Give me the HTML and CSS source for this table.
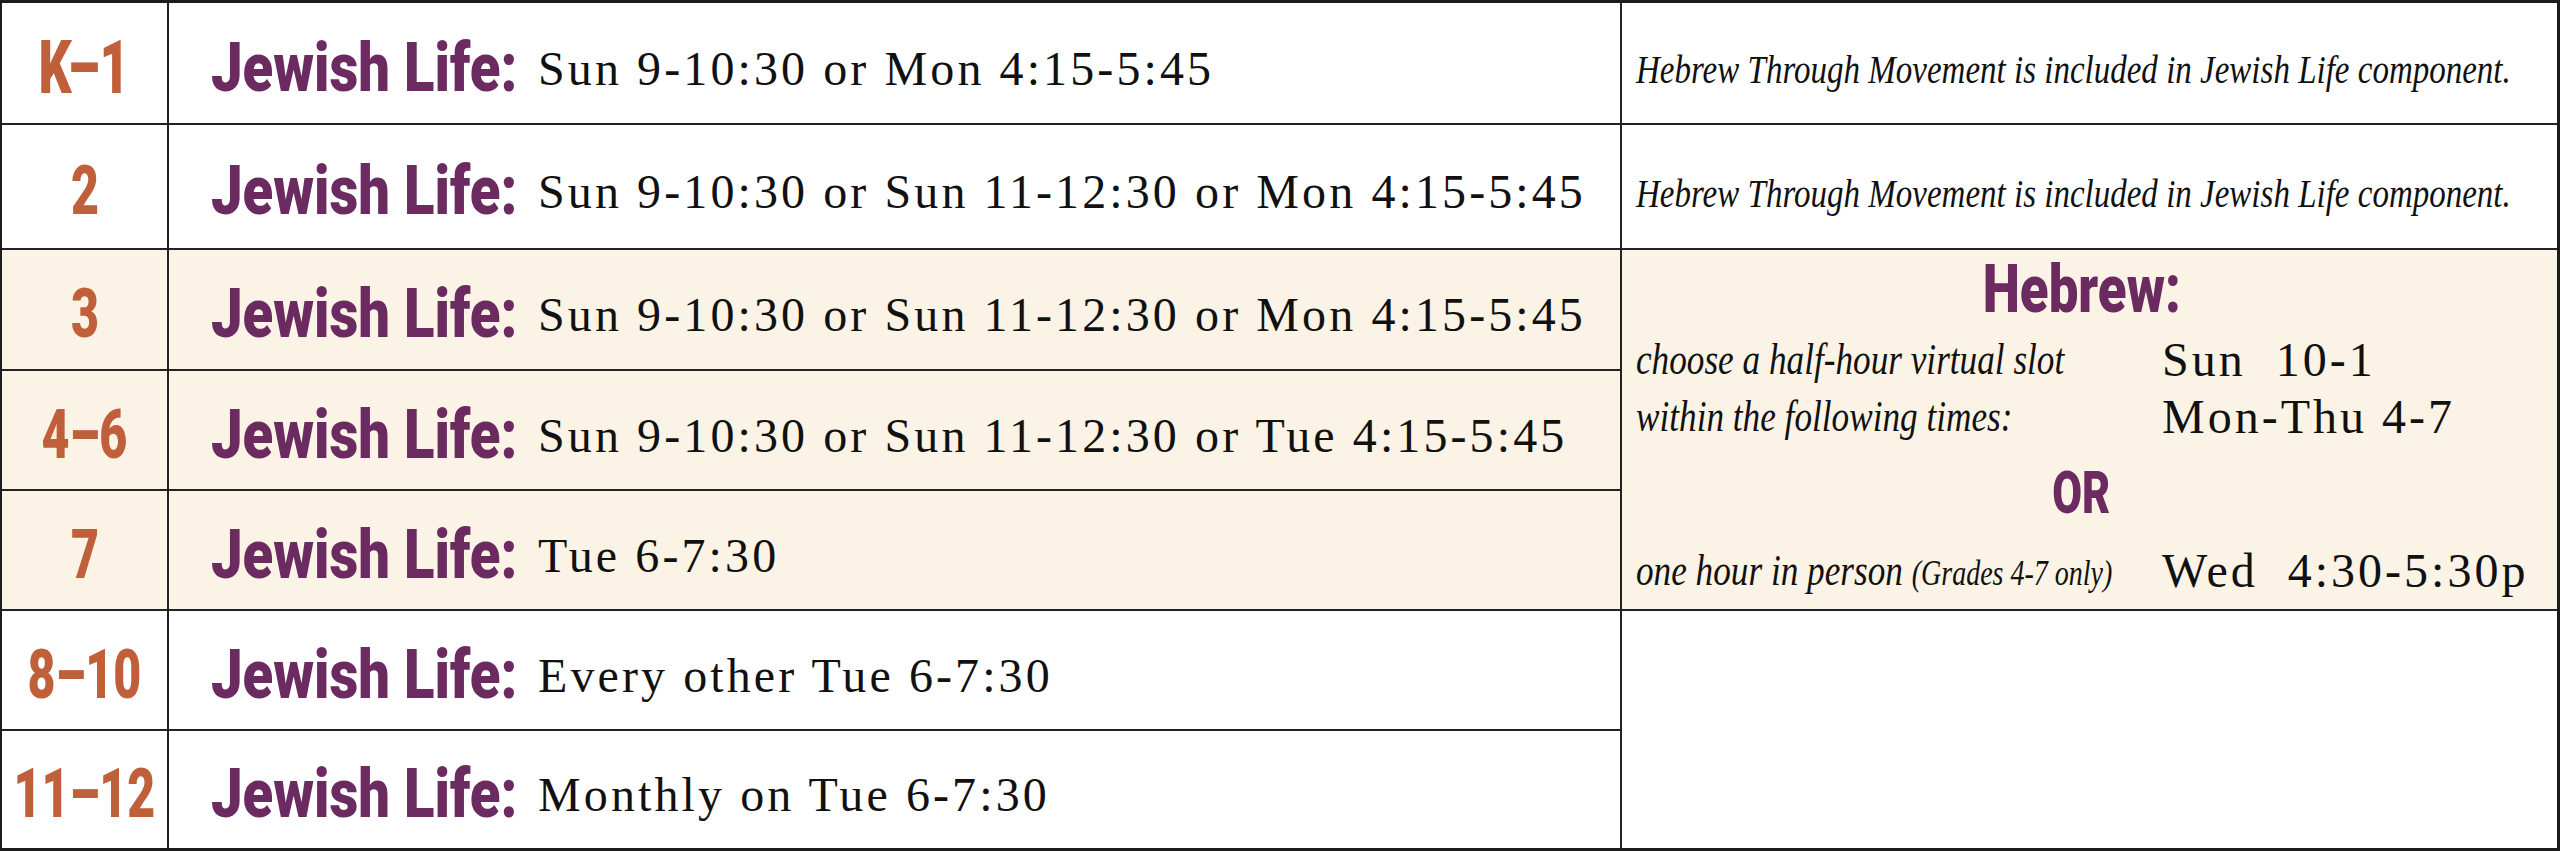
FILE: index.html
```html
<!DOCTYPE html>
<html lang="en">
<head>
<meta charset="utf-8">
<title>Schedule</title>
<link rel="stylesheet" href="styles.css">
</head>
<body>
<div class="sched">
  <div class="cell grade"><span class="g k1">K–1</span></div>
  <div class="cell jl"><span class="lbl"><span class="lbl-in">Jewish Life:</span></span><span class="times">Sun 9-10:30 or Mon 4:15-5:45</span></div>
  <div class="cell note c3"><span class="it">Hebrew Through Movement is included in Jewish Life component.</span></div>

  <div class="cell grade"><span class="g">2</span></div>
  <div class="cell jl"><span class="lbl"><span class="lbl-in">Jewish Life:</span></span><span class="times">Sun 9-10:30 or Sun 11-12:30 or Mon 4:15-5:45</span></div>
  <div class="cell note c3"><span class="it">Hebrew Through Movement is included in Jewish Life component.</span></div>

  <div class="cell grade cream"><span class="g">3</span></div>
  <div class="cell jl cream"><span class="lbl"><span class="lbl-in">Jewish Life:</span></span><span class="times">Sun 9-10:30 or Sun 11-12:30 or Mon 4:15-5:45</span></div>
  <div class="cell hebrew cream c3">
    <div class="heb-title"><span class="heb-in">Hebrew:</span></div>
    <div class="slots">
      <div class="slot-desc"><span class="sd-in">choose a half-hour virtual slot<br>within the following times:</span></div>
      <div class="slot-times">Sun&nbsp; 10-1<br>Mon-Thu 4-7</div>
    </div>
    <div class="heb-or"><span class="or-in">OR</span></div>
    <div class="slots">
      <div class="slot-desc"><span class="sd-in">one hour in person <span class="small">(Grades 4-7 only)</span></span></div>
      <div class="slot-times">Wed&nbsp; 4:30-5:30p</div>
    </div>
  </div>

  <div class="cell grade cream"><span class="g">4–6</span></div>
  <div class="cell jl cream"><span class="lbl"><span class="lbl-in">Jewish Life:</span></span><span class="times">Sun 9-10:30 or Sun 11-12:30 or Tue 4:15-5:45</span></div>

  <div class="cell grade cream"><span class="g">7</span></div>
  <div class="cell jl cream"><span class="lbl"><span class="lbl-in">Jewish Life:</span></span><span class="times">Tue 6-7:30</span></div>

  <div class="cell grade"><span class="g">8–10</span></div>
  <div class="cell jl"><span class="lbl"><span class="lbl-in">Jewish Life:</span></span><span class="times">Every other Tue 6-7:30</span></div>
  <div class="cell empty c3 last"></div>

  <div class="cell grade last"><span class="g">11–12</span></div>
  <div class="cell jl last"><span class="lbl"><span class="lbl-in">Jewish Life:</span></span><span class="times">Monthly on Tue 6-7:30</span></div>
</div>
</body>
</html>
```

FILE: styles.css
```css
* { box-sizing: border-box; }
html, body { margin: 0; padding: 0; background: #ffffff; }

.sched {
  width: 2560px;
  height: 851px;
  border: 3px solid #1c1c1c;
  border-left-width: 2px;
  display: grid;
  grid-template-columns: 167px 1453px 1fr;
  grid-template-rows: 122px 125px 121px 120px 120px 120px 1fr;
  background: #ffffff;
  overflow: hidden;
}

.cell {
  border-right: 2px solid #222222;
  border-bottom: 2px solid #222222;
  display: flex;
  align-items: center;
  min-width: 0;
  white-space: nowrap;
  background: #ffffff;
}
.cell.c3 { border-right: 0; }
.cell.last { border-bottom: 0; }
.cell.cream { background: #fbf3e5; }

.grade {
  grid-column: 1;
  justify-content: center;
  padding-top: 10px;
}
.jl { grid-column: 2; }
.g {
  display: inline-block;
  font-family: Roboto, "Liberation Sans", sans-serif;
  font-weight: 900;
  font-size: 69px;
  line-height: 1.17;
  color: #c0603a;
  transform: scaleX(0.7);
  transform-origin: center;
}
.g.k1 { font-size: 74px; }

.jl {
  padding-left: 42px;
  padding-top: 10px;
}
.lbl {
  display: inline-block;
  width: 327px;
  flex: none;
}
.lbl-in {
  display: inline-block;
  font-family: Roboto, "Liberation Sans", sans-serif;
  font-weight: 900;
  font-size: 69px;
  line-height: 1.17;
  color: #6b2a60;
  transform: scaleX(0.815);
  transform-origin: left center;
}
.times {
  font-family: "Liberation Serif", "Times New Roman", serif;
  font-size: 48px;
  letter-spacing: 3.1px;
  color: #111111;
}

.note {
  padding-left: 14px;
  padding-top: 12px;
}
.it {
  display: inline-block;
  font-family: "Liberation Serif", "Times New Roman", serif;
  font-style: italic;
  font-size: 41px;
  color: #111111;
  transform: scaleX(0.805);
  transform-origin: left center;
}

.hebrew {
  grid-column: 3;
  grid-row: 3 / span 3;
  flex-direction: column;
  align-items: stretch;
  justify-content: flex-start;
  padding: 0 30px 0 14px;
}
.empty {
  grid-column: 3;
  grid-row: 6 / span 2;
}
.heb-title, .heb-or {
  text-align: center;
  font-family: Roboto, "Liberation Sans", sans-serif;
  font-weight: 900;
  color: #6b2a60;
}
.heb-title { font-size: 66px; line-height: 80px; height: 80px; }
.heb-or { font-size: 60px; line-height: 96px; height: 96px; }
.heb-in {
  display: inline-block;
  transform: scaleX(0.8);
}
.or-in {
  display: inline-block;
  transform: scaleX(0.72);
}
.slots {
  display: grid;
  grid-template-columns: 526px 1fr;
  margin-top: 1px;
}
.slot-desc {
  font-family: "Liberation Serif", "Times New Roman", serif;
  font-style: italic;
  font-size: 44px;
  line-height: 57px;
  color: #111111;
}
.sd-in {
  display: inline-block;
  transform: scaleX(0.8);
  transform-origin: left center;
}
.small { font-size: 35px; }
.slot-times {
  font-family: "Liberation Serif", "Times New Roman", serif;
  font-size: 48px;
  line-height: 57px;
  letter-spacing: 3px;
  color: #111111;
}
```
